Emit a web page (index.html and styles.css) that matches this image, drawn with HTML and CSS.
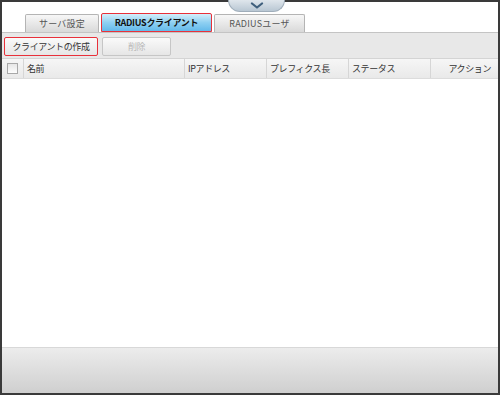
FILE: index.html
```html
<!DOCTYPE html>
<html lang="ja">
<head>
<meta charset="utf-8">
<link rel="stylesheet" href="styles.css">
</head>
<body>
<div class="frame">
  <div class="top">
    <div class="handle">
      <svg width="14" height="8" viewBox="0 0 14 8"><path d="M2 1.5 L7 5.5 L12 1.5" fill="none" stroke="#3f5f7c" stroke-width="2.2" stroke-linecap="round" stroke-linejoin="round"/></svg>
    </div>
    <div class="tabs">
      <div class="tab tab-server">サーバ設定</div>
      <div class="tab tab-active">RADIUSクライアント</div>
      <div class="tab tab-user">RADIUSユーザ</div>
    </div>
  </div>
  <div class="toolbar">
    <div class="btn btn-create">クライアントの作成</div>
    <div class="btn btn-delete">削除</div>
  </div>
  <div class="thead">
    <div class="th th-check"><span class="checkbox"></span></div>
    <div class="th">名前</div>
    <div class="th">IPアドレス</div>
    <div class="th">プレフィクス長</div>
    <div class="th">ステータス</div>
    <div class="th th-action">アクション</div>
  </div>
  <div class="tbody"></div>
  <div class="footer"></div>
</div>
</body>
</html>
```
FILE: styles.css
```css
* { box-sizing: border-box; }
html, body { margin: 0; padding: 0; background: #fff; }
body { font-family: "Noto Sans CJK JP", "DejaVu Sans", sans-serif; font-size: 9px; letter-spacing: -0.4px; color: #333; }

.frame {
  width: 500px;
  height: 395px;
  border: 2px solid #3a3a3a;
  display: flex;
  flex-direction: column;
  background: #fff;
}

.top {
  position: relative;
  height: 30px;
  display: flex;
  align-items: flex-end;
  padding-left: 23px;
}

.handle {
  position: absolute;
  left: 226px;
  top: -2px;
  width: 57px;
  height: 12px;
  background: linear-gradient(#dfe6ec, #b9c7d3);
  border: 1px solid #9fadba;
  border-top: none;
  border-radius: 0 0 16px 16px;
  display: flex;
  justify-content: center;
  align-items: center;
  padding-top: 1px;
}

.tabs { display: flex; gap: 2px; align-items: flex-end; }

.tab {
  height: 18px;
  border: 1px solid #b4b4b4;
  border-bottom: none;
  border-radius: 2px 2px 0 0;
  background: linear-gradient(#f7f7f7, #d9d9d9);
  color: #555;
  display: flex;
  align-items: center;
  justify-content: center;
  line-height: 1;
  letter-spacing: 0.2px;
}
.tab-server { width: 74px; }
.tab-active {
  width: 111px;
  height: 19px;
  border: 1px solid #e8303a;
  background: linear-gradient(#d3eefb, #8fd0f2 50%, #63b9ea);
  color: #111;
  font-weight: bold;
  letter-spacing: -0.3px;
}
.tab-user { width: 91px; }

.toolbar {
  height: 27px;
  border-top: 1px solid #c4c4c4;
  border-bottom: 1px solid #d4d4d4;
  background: #e8e8e8;
  display: flex;
  align-items: center;
  gap: 4px;
  padding: 1px 2px 0;
}

.btn {
  height: 19px;
  border: 1px solid #c6c6c6;
  border-radius: 2px;
  background: linear-gradient(#fafafa, #e6e6e6);
  display: flex;
  align-items: center;
  justify-content: center;
  line-height: 1;
}
.btn-create { width: 94px; border-color: #e8303a; color: #333; }
.btn-delete { width: 69px; color: #b8b8b8; }

.thead {
  height: 20px;
  display: grid;
  grid-template-columns: 22px 161px 82px 82px 82px 1fr;
  background: linear-gradient(#f6f6f6, #e9e9e9);
  border-bottom: 1px solid #dcdcdc;
}
.th {
  border-right: 1px solid #d6d6d6;
  display: flex;
  align-items: center;
  padding-left: 3px;
  color: #333;
  line-height: 1;
}
.th:last-child { border-right: none; }
.th-check { justify-content: center; padding-left: 0; }
.th-action { justify-content: flex-end; padding-right: 7px; }
.checkbox {
  width: 11px;
  height: 11px;
  border: 1px solid #a8a8a8;
  background: linear-gradient(#e6e6e6, #fdfdfd);
}

.tbody { flex: 1; background: #fff; }

.footer {
  height: 46px;
  border-top: 1px solid #d8d8d8;
  background: linear-gradient(#ececec, #cfcfcf);
}
```
